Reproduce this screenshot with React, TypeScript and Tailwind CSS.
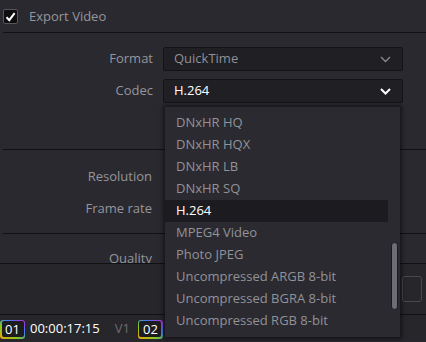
import React from "react";

const items = [
  "DNxHR HQ",
  "DNxHR HQX",
  "DNxHR LB",
  "DNxHR SQ",
  "H.264",
  "MPEG4 Video",
  "Photo JPEG",
  "Uncompressed ARGB 8-bit",
  "Uncompressed BGRA 8-bit",
  "Uncompressed RGB 8-bit",
];

function Chevron({ color, w = 1.3 }: { color: string; w?: number }) {
  return (
    <svg width="11" height="7" viewBox="0 0 11 7" fill="none">
      <path d="M1 1l4.5 4.5L10 1" stroke={color} strokeWidth={w} />
    </svg>
  );
}

function Badge({ text }: { text: string }) {
  return (
    <div className="rounded-[3px] p-[1.5px] bg-[linear-gradient(35deg,#f59e0b_0%,#84cc16_35%,#3b82f6_65%,#c026d3_100%)]">
      <div className="flex h-[16px] w-[22px] items-center justify-center rounded-[2px] bg-[#1c1c20] text-[13px] leading-none text-white">
        {text}
      </div>
    </div>
  );
}

export default function App() {
  return (
    <div
      className="relative h-[342px] w-[426px] overflow-hidden bg-[#29292f] text-[13px]"
      style={{ fontFamily: '"Open Sans", "Noto Sans", sans-serif' }}
    >
      {/* top row */}
      <div className="flex h-[32px] items-center gap-[11px] pl-[3px] pt-[1px]">
        <div className="flex h-[15px] w-[15px] items-center justify-center rounded-[2px] border border-[#55555c] bg-[#0e0e10]">
          <svg width="11" height="10" viewBox="0 0 11 10" fill="none">
            <path d="M1.5 5.2l2.8 3L9.6 1.2" stroke="#ffffff" strokeWidth="2" />
          </svg>
        </div>
        <span className="text-[#96969c]">Export Video</span>
      </div>
      <div className="ml-[3px] h-px bg-[#111114]" />

      {/* format / codec */}
      <div className="flex flex-col gap-[8px] pt-[14px] pb-[46px]">
        <div className="flex items-center">
          <span className="w-[153px] text-right text-[#96969c]">Format</span>
          <div className="ml-[10px] flex h-[24px] w-[240px] items-center justify-between rounded-[2px] border border-[#141417] bg-[#1f1f24] pl-[10px] pr-[11px] text-[#909096]">
            <span>QuickTime</span>
            <Chevron color="#8a8a90" />
          </div>
        </div>
        <div className="flex items-center">
          <span className="w-[153px] text-right text-[#96969c]">Codec</span>
          <div className="ml-[10px] flex h-[24px] w-[240px] items-center justify-between rounded-[2px] border border-[#141417] bg-[#1f1f24] pl-[10px] pr-[11px] text-white">
            <span>H.264</span>
            <Chevron color="#ffffff" w={2} />
          </div>
        </div>
      </div>
      <div className="ml-[3px] h-px bg-[#111114]" />

      {/* resolution / frame rate */}
      <div className="flex flex-col gap-[13px] pt-[17px] pb-[15px]">
        <div className="flex h-[19px] items-center">
          <span className="w-[152px] text-right text-[#96969c]">Resolution</span>
        </div>
        <div className="flex h-[19px] items-center">
          <span className="w-[152px] text-right text-[#96969c]">Frame rate</span>
        </div>
      </div>
      <div className="ml-[3px] h-px bg-[#111114]" />

      {/* quality clipped */}
      <div className="relative h-[29px] overflow-hidden">
        <span className="absolute left-0 top-[15px] w-[152px] text-right text-[#96969c]">Quality</span>
      </div>
      <div className="h-px bg-[#111114]" />

      {/* lower panel */}
      <div className="flex h-[50px] justify-end bg-[#26262b] pr-[4px] pt-[12px]">
        <div className="h-[26px] w-[20px] rounded-[3px] border border-[#48484f]" />
      </div>
      <div className="h-px bg-[#111114]" />

      {/* bottom bar */}
      <div className="flex h-[26px] items-center bg-[#26262b] pt-[2px]">
        <Badge text="01" />
        <span className="ml-[5px] text-white">00:00:17:15</span>
        <span className="ml-[15px] text-[#6c6c72]">V1</span>
        <div className="ml-[8px]">
          <Badge text="02" />
        </div>
      </div>

      {/* dropdown overlay */}
      <div className="absolute left-[165px] top-[107px] flex h-[230px] w-[235px] bg-[#2a2a30] shadow-[0_0_4px_2px_rgba(0,0,0,0.45)]">
        <div className="flex w-[223px] flex-col pt-[5px]">
          {items.map((it) => (
            <div
              key={it}
              className={
                "flex h-[22px] shrink-0 items-center pl-[11px] " +
                (it === "H.264" ? "bg-[#1c1c20] text-white" : "text-[#929298]")
              }
            >
              {it}
            </div>
          ))}
        </div>
        <div className="relative flex-1">
          <div className="absolute left-[3px] top-[135px] h-[68px] w-[7px] rounded-full border border-[#1a1a1d] bg-[#6c6c74]" />
        </div>
      </div>
    </div>
  );
}
